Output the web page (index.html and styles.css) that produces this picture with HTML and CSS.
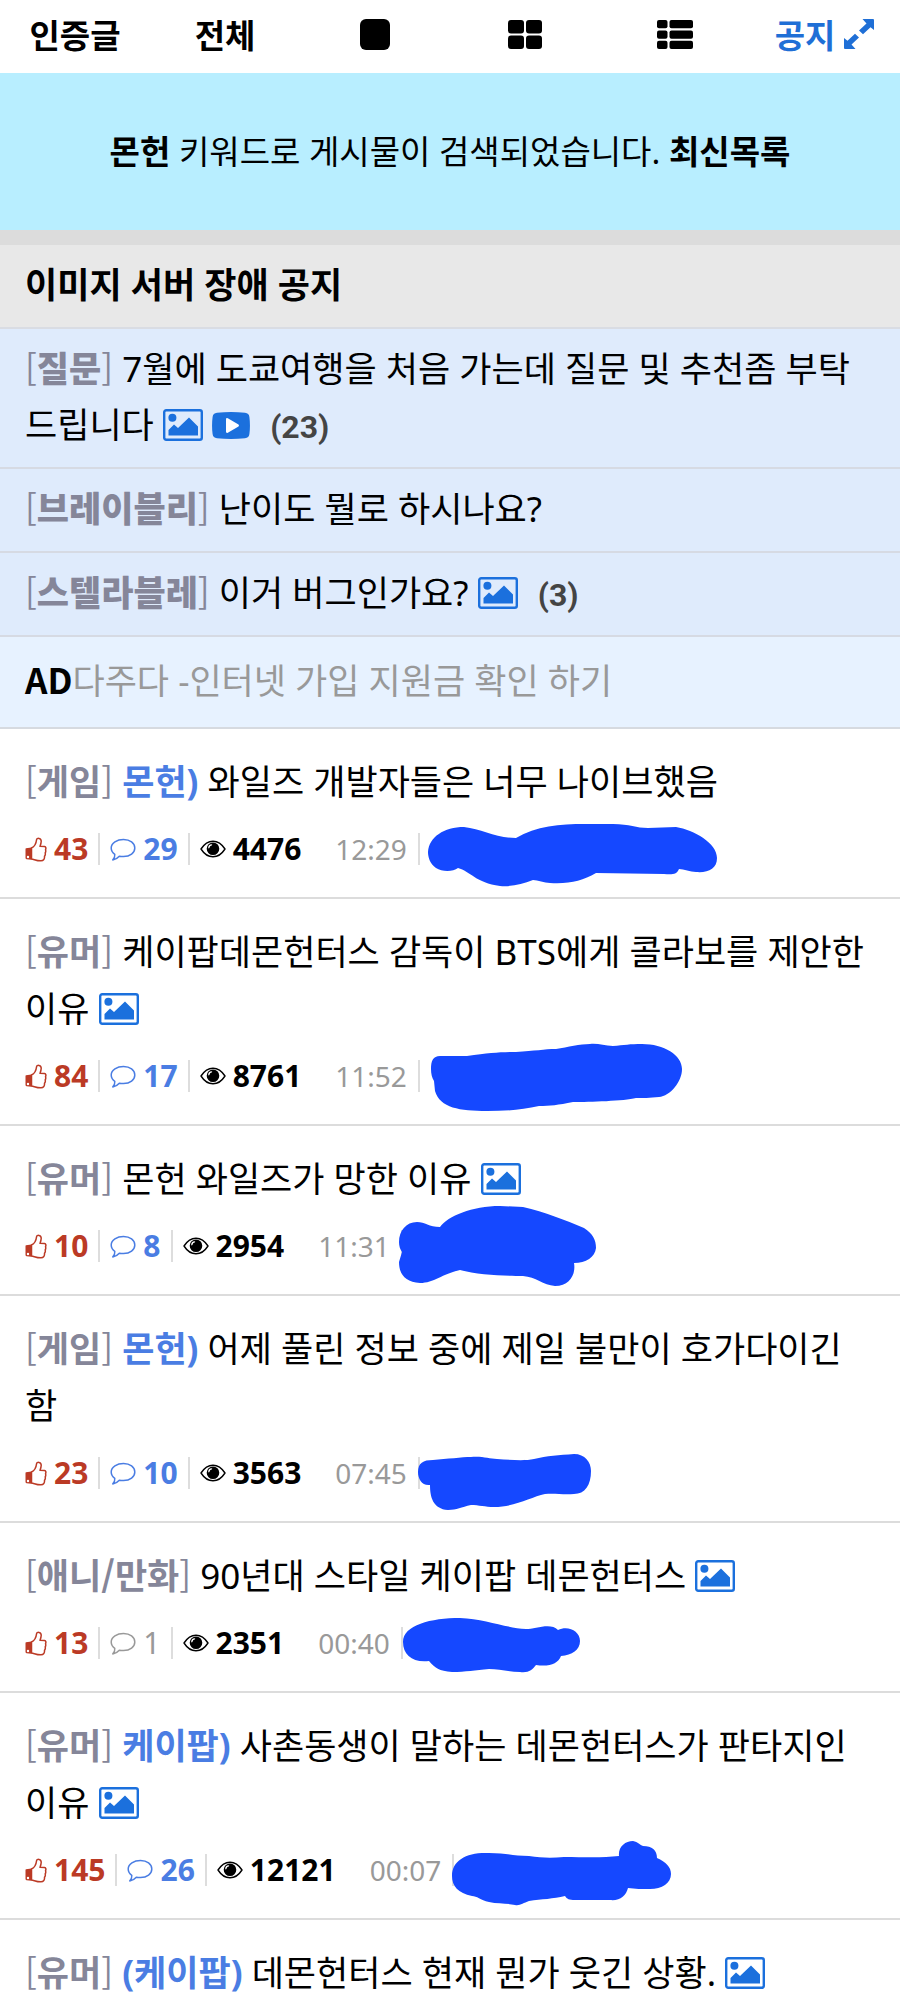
FILE: index.html
```html
<!DOCTYPE html>
<html lang="ko">
<head>
    <meta charset="UTF-8">
    <meta name="viewport" content="width=device-width, initial-scale=1.0">
    <title>몬헌 검색</title>
    <link rel="stylesheet" href="styles.css">
</head>
<body>
    <!-- shared icons -->
    <svg class="sprite" aria-hidden="true">
        <symbol id="i-image" viewBox="0 0 40 32">
            <rect x="1.2" y="1.2" width="37.6" height="29.6" rx="2" fill="none" stroke="currentColor" stroke-width="2.4"/>
            <circle cx="9.4" cy="8.8" r="4"/>
            <path d="M5.5 26.5V21L11 15.5L15 19L26 8.5L35 17.500V26.500Z"/>
        </symbol>
        <symbol id="i-video" viewBox="0 0 38 27">
            <path d="M5 .8Q19-.8 33 .8Q37 1.200 37.400 5Q38.500 13.500 37.400 22Q37 25.800 33 26.200Q19 27.800 5 26.200Q1 25.800.6 22Q-.5 13.500.6 5Q1 1.200 5 .8Z"/>
            <path d="M14 7.500Q14 5.500 15.800 6.300L26.500 12.500Q27.500 13.500 26.500 14.500L15.800 20.700Q14 21.500 14 19.500Z" fill="#fff"/>
        </symbol>
        <symbol id="i-like" viewBox="0 0 22 25">
            <path d="M6.500 11C9.500 9.500 11.200 6 11.500 3C11.700.6 16 .8 16.200 4C16.300 6 15.500 8 15 9.300L19.500 9.600C21 9.800 21.200 11.500 20.500 12.800C21 14 20.800 15 20.200 16C20.600 17.200 20.200 18.400 19.500 19.300C19.800 22 18.500 23.800 16 23.800C12 23.900 9.500 22.500 6.500 21.900Z" fill="none" stroke="currentColor" stroke-width="1.500" stroke-linejoin="round"/>
            <path fill-rule="evenodd" d="M1 11.300L6.500 10.500V22.700L1.500 22.200Q.5 22 .5 21V12.300Q.5 11.500 1 11.300ZM3 18.800A1.200 1.200 0 1 0 3 21.200A1.200 1.200 0 1 0 3 18.800Z"/>
        </symbol>
        <symbol id="i-comment" viewBox="0 0 26 24">
            <path d="M13.500 2.500C20 2.500 24.800 6 24.800 11C24.800 16 20 19.500 13.500 19.500C12 19.500 10.500 19.400 9.300 19.200C7.500 21.300 5 22.500 2.800 22.900C4.200 21.500 5 19.500 4.800 17.400C2.500 15.700 1.200 13.500 1.200 11C1.200 6 7 2.500 13.500 2.500Z" fill="none" stroke="currentColor" stroke-width="1.500" stroke-linejoin="round"/>
        </symbol>
        <symbol id="i-eye" viewBox="0 0 26 18">
            <path d="M1 9Q6 1.200 13 1.200T25 9Q20 16.800 13 16.800T1 9Z" fill="none" stroke="currentColor" stroke-width="1.400" stroke-linejoin="round"/>
            <path fill-rule="evenodd" d="M13 2.500A6.300 6.300 0 1 1 13 15.100A6.300 6.300 0 1 1 13 2.500ZM11.500 4.200Q8.300 4.400 8.200 7.700Q8.700 9.200 9.600 7.500Q10 5.800 11.700 5.600Q13 4.700 11.500 4.200Z"/>
        </symbol>
        <symbol id="i-expand" viewBox="0 0 32 32">
            <path d="M19.500 1H30Q31 1 31 2V12L27.500 9.300L20 16.200L16 12.500L23.500 5.500Z"/>
            <path d="M12.500 31H2Q1 31 1 30V20L4.500 22.700L12 15.800L16 19.500L8.500 26.500Z"/>
        </symbol>
    </svg>

    <nav class="menu">
        <a href="#">인증글</a>
        <a href="#">전체</a>
        <a href="#" aria-label="카드형">
            <svg width="30" height="31" viewBox="0 0 30 31"><rect width="30" height="31" rx="6"/></svg>
        </a>
        <a href="#" aria-label="격자형">
            <svg width="34" height="29" viewBox="0 0 34 29">
                <rect width="16" height="13.500" rx="3"/>
                <rect x="18" width="16" height="13.500" rx="3"/>
                <rect y="15.500" width="16" height="13.500" rx="3"/>
                <rect x="18" y="15.500" width="16" height="13.500" rx="3"/>
            </svg>
        </a>
        <a href="#" aria-label="목록형">
            <svg width="36" height="29" viewBox="0 0 36 29">
                <rect width="10.500" height="8.300" rx="2"/>
                <rect x="12.500" width="23.500" height="8.300" rx="2"/>
                <rect y="10.400" width="10.500" height="8.300" rx="2"/>
                <rect x="12.500" y="10.400" width="23.500" height="8.300" rx="2"/>
                <rect y="20.700" width="10.500" height="8.300" rx="2"/>
                <rect x="12.500" y="20.700" width="23.500" height="8.300" rx="2"/>
            </svg>
        </a>
        <a href="#" class="menu-notice">공지<svg width="32" height="32"><use href="#i-expand"/></svg></a>
    </nav>

    <p class="search-result"><span><b>몬헌</b> 키워드로 게시물이 검색되었습니다. <a href="#">최신목록</a></span></p>

    <h2 class="notice-title"><a href="#">이미지 서버 장애 공지</a></h2>

    <ul class="hot">
        <li>
            <a href="#"><span class="tag">[<b>질문</b>]</span> 7월에 도쿄여행을 처음 가는데 질문 및 추천좀 부탁드립니다
            <svg class="icon-image"><use href="#i-image"/></svg>
            <svg class="icon-video"><use href="#i-video"/></svg>
            <span class="count">(23)</span></a>
        </li>
        <li>
            <a href="#"><span class="tag">[<b>브레이블리</b>]</span> 난이도 뭘로 하시나요?</a>
        </li>
        <li>
            <a href="#"><span class="tag">[<b>스텔라블레</b>]</span> 이거 버그인가요?
            <svg class="icon-image"><use href="#i-image"/></svg>
            <span class="count">(3)</span></a>
        </li>
    </ul>

    <p class="ad"><b>AD</b><a href="#">다주다 -인터넷 가입 지원금 확인 하기</a></p>

    <ul class="posts">
        <li>
            <a class="title" href="#"><span class="tag">[<b>게임</b>]</span> <b class="head">몬헌)</b> 와일즈 개발자들은 너무 나이브했음</a>
            <div class="meta">
                <span class="like"><svg width="22" height="25"><use href="#i-like"/></svg>43</span>
                <span class="comment"><svg width="26" height="24"><use href="#i-comment"/></svg>29</span>
                <span class="view"><svg width="26" height="18"><use href="#i-eye"/></svg>4476</span>
                <span class="time">12:29</span>
                <svg class="marker" viewBox="0 0 300 40" width="300"><path d="M8 23C9 8 24-2 44-2C62 0 76 9 96 9C116-3 140-5 165-5L193-5C210-5 216-1 228-1L256-2C274 1 297 14 297 29C297 40 288 44 276 43C270 43 264 40 259 40C257 45 253 46 244 45L176 44C162 52 150 55 130 54C124 54 118 51 113 51C102 55 92 58 80 57C56 54 50 42 38 39C33 43 22 43 16 39C10 35 8 28 8 23Z"/></svg>
            </div>
        </li>
        <li>
            <a class="title" href="#"><span class="tag">[<b>유머</b>]</span> 케이팝데몬헌터스 감독이 BTS에게 콜라보를 제안한 이유
            <svg class="icon-image"><use href="#i-image"/></svg></a>
            <div class="meta">
                <span class="like"><svg width="22" height="25"><use href="#i-like"/></svg>84</span>
                <span class="comment"><svg width="26" height="24"><use href="#i-comment"/></svg>17</span>
                <span class="view"><svg width="26" height="18"><use href="#i-eye"/></svg>8761</span>
                <span class="time">11:52</span>
                <svg class="marker" viewBox="0 0 300 40" width="300"><path d="M11 13C11 5 13 0 20 0L47 0C70-3 80-4 96-4C115-5 124-7 136-7C148-9 160-12 170-12C178-13 184-10 193-10C204-11 210-12 222-12C244-12 262-1 262 13C262 26 250 40 239 41C230 42 222 42 216 42C204 45 170 46 153 46C138 49 130 50 119 50C102 54 85 55 67 55C40 55 20 52 15 35L14 25C12 22 11 18 11 13Z"/></svg>
            </div>
        </li>
        <li>
            <a class="title" href="#"><span class="tag">[<b>유머</b>]</span> 몬헌 와일즈가 망한 이유
            <svg class="icon-image"><use href="#i-image"/></svg></a>
            <div class="meta">
                <span class="like"><svg width="22" height="25"><use href="#i-like"/></svg>10</span>
                <span class="comment"><svg width="26" height="24"><use href="#i-comment"/></svg>8</span>
                <span class="view"><svg width="26" height="18"><use href="#i-eye"/></svg>2954</span>
                <span class="time">11:31</span>
                <svg class="marker" viewBox="0 0 300 40" width="300"><path d="M-4 16C-4 5 3-4 14-4C22-4 26 1 37 1C45-10 69-20 97-20L120-19C142-14 162-6 181 2C190 8 193 14 193 22C192 31 183 37 171 37C173 48 167 60 152 60C140 59 133 51 120 50C102 50 75 49 57 44C39 48 31 57 17 57C2 56-4 48-4 36L-1 26C-3 23-4 20-4 16Z"/></svg>
            </div>
        </li>
        <li>
            <a class="title" href="#"><span class="tag">[<b>게임</b>]</span> <b class="head">몬헌)</b> 어제 풀린 정보 중에 제일 불만이 호가다이긴 함</a>
            <div class="meta">
                <span class="like"><svg width="22" height="25"><use href="#i-like"/></svg>23</span>
                <span class="comment"><svg width="26" height="24"><use href="#i-comment"/></svg>10</span>
                <span class="view"><svg width="26" height="18"><use href="#i-eye"/></svg>3563</span>
                <span class="time">07:45</span>
                <svg class="marker" viewBox="0 0 300 40" width="300"><path d="M-2 19C-2 10 3 7 13 7C27 6 42 4 51 4C63 3 69 6 77 6C92 7 105 8 114 6C127 3 139 2 154 1C165 1 171 9 171 18C171 32 165 41 154 41C143 42 135 40 125 41C111 44 95 54 74 54C65 54 59 52 51 52C41 54 37 57 28 57C13 56 10 44 10 32C2 33-2 26-2 19Z"/></svg>
            </div>
        </li>
        <li>
            <a class="title" href="#"><span class="tag">[<b>애니/만화</b>]</span> 90년대 스타일 케이팝 데몬헌터스
            <svg class="icon-image"><use href="#i-image"/></svg></a>
            <div class="meta">
                <span class="like"><svg width="22" height="25"><use href="#i-like"/></svg>13</span>
                <span class="comment few"><svg width="26" height="24"><use href="#i-comment"/></svg>1</span>
                <span class="view"><svg width="26" height="18"><use href="#i-eye"/></svg>2351</span>
                <span class="time">00:40</span>
                <svg class="marker" viewBox="0 0 300 40" width="300"><path d="M0 19C0 2 28-5 57-5C82-4 103 5 123 6C132 6 148-1 155 7C165 2 177 8 177 18C177 27 169 32 158 33C155 41 146 44 133 42C129 47 126 50 117 49C106 49 96 46 86 46C72 47 63 49 49 49C36 48 32 45 26 38C10 40 0 32 0 19Z"/></svg>
            </div>
        </li>
        <li>
            <a class="title" href="#"><span class="tag">[<b>유머</b>]</span> <b class="head">케이팝)</b> 사촌동생이 말하는 데몬헌터스가 판타지인 이유
            <svg class="icon-image"><use href="#i-image"/></svg></a>
            <div class="meta">
                <span class="like"><svg width="22" height="25"><use href="#i-like"/></svg>145</span>
                <span class="comment"><svg width="26" height="24"><use href="#i-comment"/></svg>26</span>
                <span class="view"><svg width="26" height="18"><use href="#i-eye"/></svg>12121</span>
                <span class="time">00:07</span>
                <svg class="marker" viewBox="0 0 300 40" width="300"><path d="M-2 26C-2 10 13 2 35 3C53 3 60 6 75 6C88 8 98 8 110 7C130 7 148 8 165 6C164-3 171-9 179-9C184-8 186-5 189-4C198-4 203 0 203 8C212 12 217 17 217 24C217 33 208 39 196 39C188 39 181 39 174 38C172 46 166 51 156 50L121 50C115 50 113 49 111 46C99 49 88 49 75 51C69 53 66 56 61 55C53 53 44 54 35 52C26 50 23 46 18 46C4 43-2 36-2 26Z"/></svg>
            </div>
        </li>
        <li>
            <a class="title" href="#"><span class="tag">[<b>유머</b>]</span> <b class="head">(케이팝)</b> 데몬헌터스 현재 뭔가 웃긴 상황.
            <svg class="icon-image"><use href="#i-image"/></svg></a>
        </li>
    </ul>
</body>
</html>
```
FILE: styles.css
```css
* {
    box-sizing: border-box;
}
body {
    margin: 0;
    height: 100vh;
    overflow: hidden;
    background-color: #fff;
    color: #000;
    font-family: "Noto Sans", "Noto Sans CJK KR", sans-serif;
    font-size: 35px;
}
a {
    color: inherit;
    text-decoration: none;
}
ul {
    list-style: none;
    margin: 0;
    padding: 0;
}
svg {
    fill: currentColor;
}
.sprite {
    display: none;
}

/* top menu */
.menu {
    display: grid;
    grid-template-columns: repeat(6, 1fr);
    height: 73px;
    padding-bottom: 5px;
    font-size: 33px;
    font-weight: bold;
}
.menu a {
    display: flex;
    align-items: center;
    justify-content: center;
    gap: 8px;
}
.menu .menu-notice {
    color: #1f6fd6;
}

.search-result {
    display: flex;
    align-items: center;
    justify-content: center;
    height: 157px;
    margin: 0;
    padding-bottom: 4px;
    background-color: #b8eeff;
    font-size: 33px;
}
.search-result a {
    font-weight: bold;
}

/* notices */
.notice-title {
    margin: 0;
    padding: 11px 25px 14px;
    border-top: 15px solid #dcdcdc;
    border-bottom: 2px solid #d9dce3;
    background-color: #e8e8e8;
    font-size: 35px;
    line-height: 57px;
}
.hot li {
    padding: 12px 25px 14px;
    border-bottom: 2px solid #d6dae3;
    background-color: #dfebfc;
    line-height: 56px;
}
.tag {
    color: #858699;
    font-family: "Noto Sans CJK KR", sans-serif;
    line-height: 1;
}
.hot .tag b {
    font-weight: 900;
}
.icon-image {
    width: 40px;
    height: 32px;
    color: #1b70dd;
    vertical-align: -3px;
}
.icon-video {
    width: 38px;
    height: 27px;
    color: #1b70dd;
    vertical-align: -1px;
}
.count {
    margin-left: 11px;
    color: #444;
    font-family: Roboto, sans-serif;
    font-size: 32px;
    font-weight: bold;
    line-height: 1;
}
.ad {
    margin: 0;
    padding: 16px 25px 18px;
    border-bottom: 2px solid #d6dae0;
    background-color: #e7f2ff;
    line-height: 56px;
}
.ad b {
    font-family: "Noto Sans CJK KR", sans-serif;
    line-height: 1;
}
.ad a {
    color: #999;
}

/* post list */
.posts li {
    padding: 24px 25px 28px;
    border-bottom: 2px solid #dcdcdc;
}
.title {
    display: block;
    line-height: 57px;
}
.head {
    color: #4a7de3;
}
.meta {
    display: flex;
    align-items: center;
    height: 40px;
    margin-top: 19px;
    font-size: 30px;
    font-weight: bold;
    line-height: 32px;
}
.meta span {
    display: flex;
    align-items: center;
    gap: 7px;
}
.like,
.comment {
    margin-right: 10px;
    padding-right: 10px;
    border-right: 2px solid #ddd;
}
.like {
    color: #bb3a25;
}
.comment {
    color: #4a7de3;
}
.few {
    color: #999;
    font-weight: normal;
}
.view {
    margin-right: 34px;
}
.time {
    padding-right: 11px;
    border-right: 2px solid #ddd;
    color: #999;
    font-size: 28px;
    font-weight: normal;
}
.marker {
    height: 40px;
    overflow: visible;
    color: #1548ff;
}
```
